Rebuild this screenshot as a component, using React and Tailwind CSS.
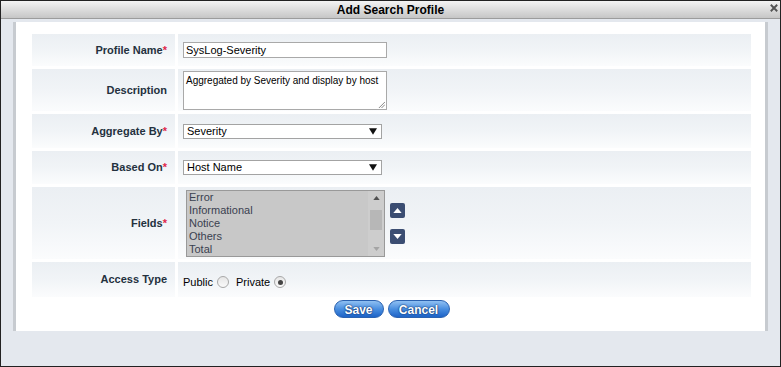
// Add Search Profile dialog
import { useState } from 'react';

const font = { fontFamily: '"Liberation Sans", Arial, sans-serif' };

function Label({ text, required }) {
  return (
    <div className="flex items-center justify-end pr-[8px] bg-gradient-to-b from-[#ebeff3] via-[#f1f4f7] to-[#fbfcfd] text-[11px] font-bold text-[#24313e]">
      {text}
      {required && <span className="text-[#e0284a]">*</span>}
    </div>
  );
}

function Cell({ children, className = '' }) {
  return (
    <div className={`flex items-center pl-[5px] bg-gradient-to-b from-[#ebeff3] via-[#f1f4f7] to-[#fbfcfd] ${className}`}>
      {children}
    </div>
  );
}

function Select({ value }) {
  return (
    <div className="w-[199px] h-[15px] border border-[#a3a3a3] bg-white flex items-center justify-between pl-[3px] pr-[4px] text-[11px] text-black">
      <span>{value}</span>
      <svg viewBox="0 0 10 8" className="w-[8px] h-[7px]">
        <path d="M0 0h10L5 8z" fill="#111" />
      </svg>
    </div>
  );
}

function Radio({ checked }) {
  return (
    <span className="inline-flex w-[12px] h-[12px] rounded-full border border-[#a8a8a8] bg-gradient-to-b from-[#e6e6e6] to-[#fafafa] items-center justify-center ml-[4px]">
      {checked && <span className="w-[5px] h-[5px] rounded-full bg-[#444]" />}
    </span>
  );
}

function MoveButton({ up }) {
  return (
    <div className="w-[15px] h-[15px] bg-[#3b4d72] rounded-[2px] flex items-center justify-center">
      <svg viewBox="0 0 10 6" className="w-[9px] h-[5px]">
        <path d={up ? 'M0 6L5 0l5 6z' : 'M0 0h10L5 6z'} fill="#fff" />
      </svg>
    </div>
  );
}

function BlueButton({ children, w }) {
  return (
    <button
      type="button"
      className={`${w} h-[18px] rounded-full border border-[#2b62b0] bg-gradient-to-b from-[#8fc0f2] via-[#4a8fe0] to-[#1d63c7] text-white text-[12px] font-bold [text-shadow:0_0_2px_#0b2f6a,0_0_1px_#0b2f6a]`}
    >
      {children}
    </button>
  );
}

export default function App() {
  const [access, setAccess] = useState('private');
  const fields = ['Error', 'Informational', 'Notice', 'Others', 'Total'];

  return (
    <div style={font} className="w-[781px] h-[367px] border border-[#222] bg-[#e4e8ee] flex flex-col overflow-hidden">
      {/* ─── Title bar ─── */}
      <div className="relative h-[18px] shrink-0 bg-gradient-to-b from-[#f4f4f4] to-[#c6c6c6] border-b border-[#9c9c9c] flex items-center justify-center">
        <span className="text-[12px] font-bold text-black leading-none">Add Search Profile</span>
        <svg viewBox="0 0 10 10" className="absolute right-[2px] top-[3px] w-[8px] h-[8px]">
          <path d="M1 1l8 8M9 1l-8 8" stroke="#555" strokeWidth="2.4" />
        </svg>
      </div>

      {/* ─── Body ─── */}
      <div className="flex-1 px-[12px] pt-[3px] pb-[35px] flex">
        <div className="flex-1 bg-white border-x-[3px] border-[#c7cbd0] pt-[12px] pl-[16px] pr-[14px] flex flex-col">
          <div className="grid grid-cols-[143px_1fr] gap-x-[3px] gap-y-[3px] grid-rows-[32px_42px_34px_33px_72px_35px]">
            <Label text="Profile Name" required />
            <Cell>
              <div className="w-[204px] h-[16px] border border-[#a9a9a9] bg-white px-[2px] text-[11px] leading-[14px] text-black">
                SysLog-Severity
              </div>
            </Cell>

            <Label text="Description" />
            <Cell className="items-start pt-[2px]">
              <div className="relative w-[204px] h-[39px] border border-[#a9a9a9] bg-white px-[2px] pt-[2px] text-[10px] leading-[13px] whitespace-nowrap text-black">
                Aggregated by Severity and display by host
                <svg viewBox="0 0 8 8" className="absolute right-[1px] bottom-[1px] w-[7px] h-[7px]">
                  <path d="M8 1L1 8M8 4L4 8" stroke="#777" strokeWidth="1" />
                </svg>
              </div>
            </Cell>

            <Label text="Aggregate By" required />
            <Cell>
              <Select value="Severity" />
            </Cell>

            <Label text="Based On" required />
            <Cell>
              <Select value="Host Name" />
            </Cell>

            <Label text="Fields" required />
            <Cell className="pl-[8px] gap-[5px]">
              <div className="w-[199px] h-[67px] border border-[#999] bg-[#c8c8c8] flex">
                <div className="flex-1 pl-[2px] text-[11px] leading-[13px] text-[#3a4150]">
                  {fields.map((f) => (
                    <div key={f}>{f}</div>
                  ))}
                </div>
                <div className="w-[16px] flex flex-col items-center justify-between py-[5px] bg-[#cdcdcd]">
                  <svg viewBox="0 0 8 5" className="w-[7px] h-[4px]">
                    <path d="M0 5L4 0l4 5z" fill="#505050" />
                  </svg>
                  <div className="w-[12px] h-[20px] bg-[#b7b7b7] mb-[6px]" />
                  <svg viewBox="0 0 8 5" className="w-[7px] h-[4px]">
                    <path d="M0 0h8L4 5z" fill="#a4a4a4" />
                  </svg>
                </div>
              </div>
              <div className="flex flex-col gap-[11px]">
                <MoveButton up />
                <MoveButton />
              </div>
            </Cell>

            <Label text="Access Type" />
            <Cell className="text-[11px] text-black pt-[5px]">
              <span onClick={() => setAccess('public')} className="inline-flex items-center">
                Public
                <Radio checked={access === 'public'} />
              </span>
              <span onClick={() => setAccess('private')} className="inline-flex items-center ml-[7px]">
                Private
                <Radio checked={access === 'private'} />
              </span>
            </Cell>
          </div>

          {/* ─── Actions ─── */}
          <div className="flex justify-center gap-[4px] mt-[3px]">
            <BlueButton w="w-[50px]">Save</BlueButton>
            <BlueButton w="w-[62px]">Cancel</BlueButton>
          </div>
        </div>
      </div>
    </div>
  );
}
